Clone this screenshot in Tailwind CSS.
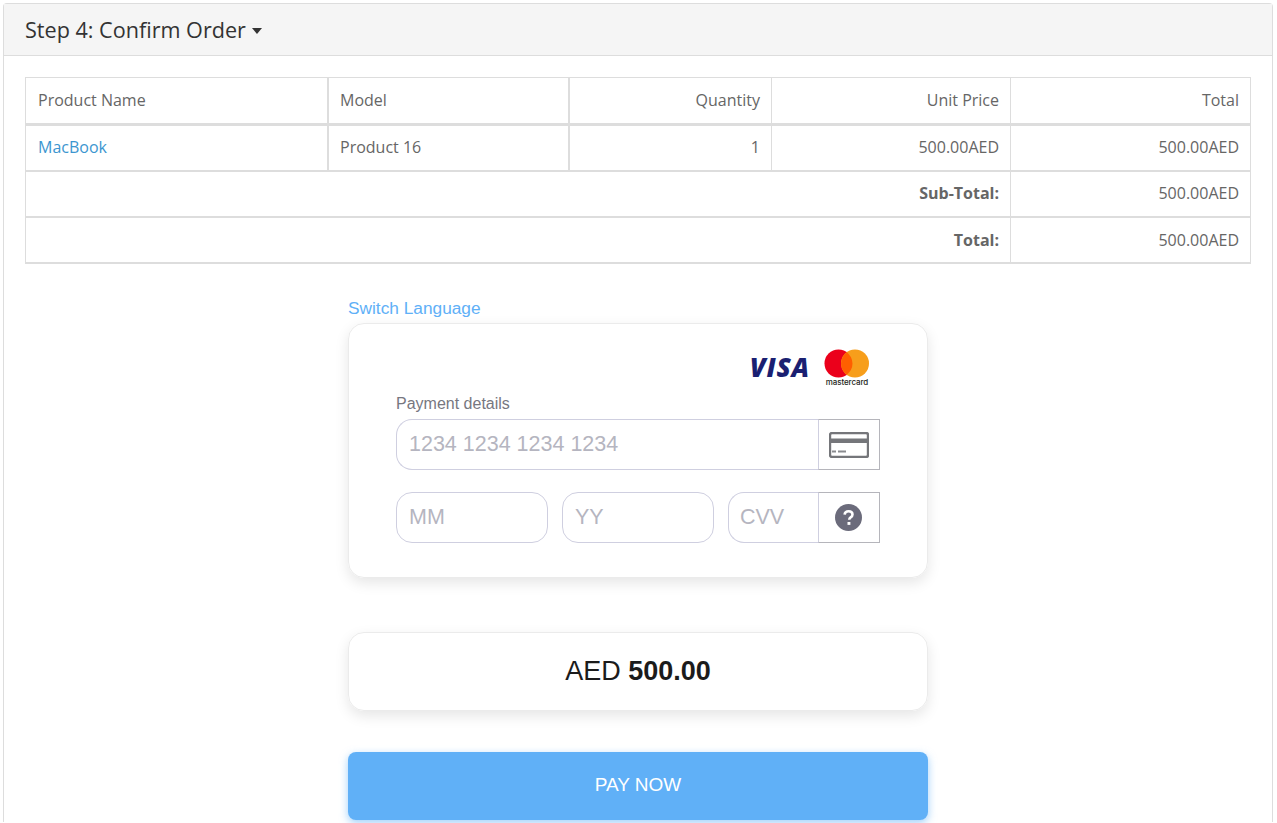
<!DOCTYPE html>
<html lang="en">
<head>
    <meta charset="UTF-8">
    <title>Step 4: Confirm Order</title>
    <script src="https://cdn.jsdelivr.net/npm/@tailwindcss/browser@4"></script>
</head>
<body class="bg-white h-screen overflow-hidden font-['Open_Sans',sans-serif] text-[16px] text-[#666666]">
    <div class="mt-[3px] mx-[3px] w-[1270px] border border-[#dddddd] rounded-t-[4px] h-[819px] border-b-0">
        <!-- panel heading -->
        <div class="h-[52px] bg-[#f5f5f5] border-b border-[#dddddd] pl-[21px] flex items-center">
            <h4 class="text-[21.6px] text-[#333333] leading-none">Step 4: Confirm Order</h4>
            <span class="ml-[6px] mt-[3px] w-0 h-0 border-x-[5.5px] border-x-transparent border-t-[6px] border-t-[#333333]"></span>
        </div>

        <div class="pt-[21px] px-[21px]">
            <table class="table-fixed border-separate border-spacing-0 w-[1226px] border-t border-l border-r border-[#dddddd]">
                <colgroup>
                    <col class="w-[303px]"><col class="w-[241px]"><col class="w-[202px]"><col class="w-[239px]"><col class="w-[239px]">
                </colgroup>
                <thead>
                    <tr class="h-[48px]">
                        <td class="pl-[12px] pb-[2px] border-b-[3px] border-r-2 border-[#dddddd]">Product Name</td>
                        <td class="px-[11px] pb-[2px] border-b-[3px] border-r-2 border-[#dddddd]">Model</td>
                        <td class="px-[11px] pb-[2px] border-b-[3px] border-r border-[#dddddd] text-right">Quantity</td>
                        <td class="px-[11px] pb-[2px] border-b-[3px] border-r border-[#dddddd] text-right">Unit Price</td>
                        <td class="px-[11px] pb-[2px] border-b-[3px] border-[#dddddd] text-right">Total</td>
                    </tr>
                </thead>
                <tbody>
                    <tr class="h-[46px]">
                        <td class="pl-[12px] pb-[3px] border-b-2 border-r-2 border-[#dddddd] text-[#3c96d0]">MacBook</td>
                        <td class="px-[11px] pb-[3px] border-b-2 border-r-2 border-[#dddddd]">Product 16</td>
                        <td class="px-[11px] pb-[3px] border-b-2 border-r border-[#dddddd] text-right">1</td>
                        <td class="px-[11px] pb-[3px] border-b-2 border-r border-[#dddddd] text-right">500.00AED</td>
                        <td class="px-[11px] pb-[3px] border-b-2 border-[#dddddd] text-right">500.00AED</td>
                    </tr>
                    <tr class="h-[46px]">
                        <td colspan="4" class="px-[11px] pb-[3px] border-b-2 border-r border-[#dddddd] text-right font-bold">Sub-Total:</td>
                        <td class="px-[11px] pb-[3px] border-b-2 border-[#dddddd] text-right">500.00AED</td>
                    </tr>
                    <tr class="h-[46px]">
                        <td colspan="4" class="px-[11px] border-b-2 border-r border-[#dddddd] text-right font-bold">Total:</td>
                        <td class="px-[11px] border-b-2 border-[#dddddd] text-right">500.00AED</td>
                    </tr>
                </tbody>
            </table>

            <!-- payment widget -->
            <div class="w-[580px] ml-[323px] mt-[34px] font-['Liberation_Sans',sans-serif]">
                <a class="block text-[17.3px] leading-[20px] text-[#60b0f7]">Switch Language</a>

                <div class="mt-[5px] h-[255px] rounded-[16px] border border-[#ebebeb] shadow-[0_5px_14px_rgba(0,0,0,0.1)] pt-[25px] px-[47px]">
                    <div class="flex justify-end items-start h-[38px] pr-[10px]">
                        <span class="mt-[3px] text-[26px] leading-[30px] font-extrabold italic font-['Open_Sans',sans-serif] text-[#1a1f71] tracking-[0.8px]">VISA</span>
                        <div class="ml-[14px] w-[46px] flex flex-col items-center">
                            <svg width="46" height="29" viewBox="0 0 46 29">
                                <circle cx="14.5" cy="14.5" r="14" fill="#eb001b"/>
                                <circle cx="31" cy="14.5" r="14" fill="#f79e1b"/>
                                <path d="M22.75 3.2a14 14 0 0 1 0 22.6a14 14 0 0 1 0-22.6z" fill="#ff5f00"/>
                            </svg>
                            <span class="text-[8px] leading-[8px] text-[#231f20] font-medium font-['Inter',sans-serif] tracking-[-0.1px]">mastercard</span>
                        </div>
                    </div>

                    <label class="block mt-[7px] text-[16px] leading-[20px] text-[#77777f]">Payment details</label>

                    <div class="mt-[5px] flex h-[51px] w-[484px]">
                        <div class="flex-1 border border-r-0 border-[#cfcfe0] rounded-l-[16px] pl-[12px] flex items-center text-[21.5px] text-[#b5b5c0]">1234 1234 1234 1234</div>
                        <div class="w-[62px] border border-[#b5b5bb] border-l-[#cfcfe0] flex items-center justify-center">
                            <svg width="40" height="26" viewBox="0 0 40 26">
                                <rect x="1" y="1" width="38" height="24" rx="2" fill="none" stroke="#75767a" stroke-width="2.4"/>
                                <rect x="1" y="6.5" width="38" height="4.5" fill="#75767a"/>
                                <rect x="3" y="18.5" width="4" height="2" fill="#8a8b8f"/>
                                <rect x="9" y="18.5" width="8" height="2" fill="#8a8b8f"/>
                            </svg>
                        </div>
                    </div>

                    <div class="mt-[22px] flex gap-[14px] w-[484px]">
                        <div class="w-[152px] h-[51px] border border-[#cfcfe0] rounded-[16px] pl-[12px] flex items-center text-[21.5px] text-[#b5b5c0]">MM</div>
                        <div class="w-[152px] h-[51px] border border-[#cfcfe0] rounded-[16px] pl-[12px] flex items-center text-[21.5px] text-[#b5b5c0]">YY</div>
                        <div class="flex-1 flex h-[51px]">
                            <div class="flex-1 border border-r-0 border-[#cfcfe0] rounded-l-[16px] pl-[11px] flex items-center text-[21.5px] text-[#b5b5c0]">CVV</div>
                            <div class="w-[62px] border border-[#b5b5bb] border-l-[#cfcfe0] flex items-center justify-center">
                                <svg class="-ml-[1px]" width="27" height="27" viewBox="0 0 27 27">
                                    <circle cx="13.5" cy="13.5" r="13.5" fill="#6b6b7b"/>
                                    <path d="M9.6 10.6c.2-2.2 1.8-3.4 4-3.4 2.3 0 3.9 1.3 3.9 3.2 0 1.5-.8 2.2-1.9 3-.9.6-1.3 1-1.3 2v.4" fill="none" stroke="#ffffff" stroke-width="2.6"/>
                                    <rect x="12.5" y="18" width="2.9" height="2.9" fill="#ffffff"/>
                                </svg>
                            </div>
                        </div>
                    </div>
                </div>

                <div class="mt-[54px] h-[79px] rounded-[16px] border border-[#ebebeb] shadow-[0_5px_14px_rgba(0,0,0,0.1)] flex items-center justify-center text-[27px] text-[#1b1b1b]">
                    <span>AED <b class="font-bold">500.00</b></span>
                </div>

                <button class="mt-[41px] w-[580px] h-[68px] pb-[2px] rounded-[8px] bg-[#60b0f7] text-white text-[19px] shadow-[0_3px_8px_rgba(96,176,247,0.6)]">PAY NOW</button>
            </div>
        </div>
    </div>
</body>
</html>
